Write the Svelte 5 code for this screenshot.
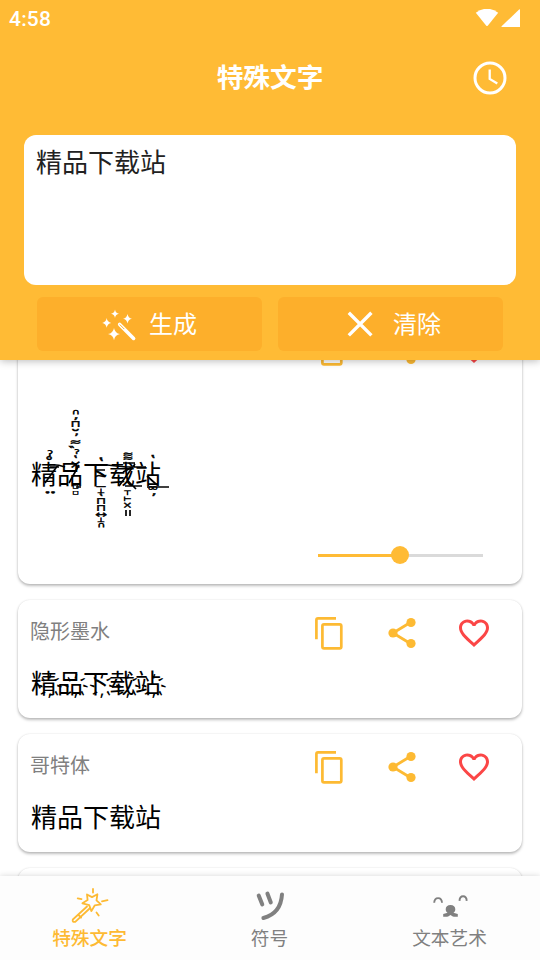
<script>
  let text = $state("精品下载站");
  let level = $state(50);
  let active = $state("特殊文字");

  const tabs = ["特殊文字", "符号", "文本艺术"];

  // Marks stacked over and under each letter: [glyph, x, y, size, rise]
  // rise is how far the glyph's middle sits above its baseline, in em
  const marks = [
    ["ˀ", 50, 53, 13, 0.58],
    ["˚", 49, 60, 15, 0.69],
    ["∙", 47.5, 92, 9, 0.31],
    ["∙", 53, 92, 9, 0.31],
    ["∩", 75.5, 11, 8, 0.36],
    ["ʼ", 76, 17.5, 14, 0.64],
    ["⊓", 75.5, 23.5, 10, 0.36],
    ["˘", 75.5, 29.5, 16, 0.72],
    ["ʼ", 76.5, 34.5, 12, 0.64],
    ["≈", 75.5, 42, 11, 0.31],
    ["‶", 71.5, 48, 12, 0.6],
    ["ˀ", 77, 52, 12, 0.58],
    ["ʽ", 75.5, 58, 12, 0.64],
    ["×", 75.5, 64.5, 11, 0.31],
    ["□", 75.5, 86.5, 5, 0.36],
    ["□", 75.5, 92, 5, 0.36],
    ["ʽ", 101, 61, 15, 0.64],
    ["~", 101, 77, 12, 0.31],
    ["−", 101, 87, 11, 0.31],
    ["⊥", 101, 91, 7, 0.36],
    ["ʽ", 101, 96, 12, 0.64],
    ["⊓", 101, 101, 10, 0.36],
    ["⊓", 101, 107.5, 10, 0.36],
    ["↔", 101, 114, 11, 0.36],
    ["⊥", 101, 119.5, 7, 0.36],
    ["∩", 101, 124.5, 8, 0.36],
    ["≈", 128, 54, 10, 0.31],
    ["≈", 128, 58.5, 10, 0.31],
    ["⊤", 127.5, 93, 7, 0.36],
    ["⊢", 127.5, 98.5, 7, 0.36],
    ["×", 127.5, 105.5, 9, 0.31],
    ["ʽ", 153, 58, 14, 0.64],
    ["∞", 153, 87.5, 11, 0.31],
    ["ʼ", 154, 94, 14, 0.64],
  ];
</script>

{#snippet copyIcon()}
  <svg class="icon" viewBox="0 0 36 36" fill="none" stroke="#fdba33" stroke-width="2.7">
    <path d="M4.4 24.3V5q0-1.6 1.6-1.6H24" />
    <rect x="10.4" y="9.4" width="18.9" height="23.9" rx="1.6" />
  </svg>
{/snippet}

{#snippet shareIcon()}
  <svg class="icon" viewBox="0 0 36 36" fill="#fdba33">
    <path d="M26.7 7.3L9 18l17.7 10.7" fill="none" stroke="#fdba33" stroke-width="2.8" />
    <circle cx="27" cy="7.5" r="4.6" />
    <circle cx="9" cy="18" r="4.6" />
    <circle cx="27" cy="28.5" r="4.6" />
  </svg>
{/snippet}

{#snippet heartIcon()}
  <svg class="icon" viewBox="0 0 24 24" fill="#fb4646">
    <path d="M16.5 3c-1.74 0-3.41.81-4.5 2.09C10.91 3.81 9.24 3 7.5 3 4.42 3 2 5.42 2 8.5c0 3.78 3.4 6.86 8.55 11.54L12 21.35l1.45-1.32C18.6 15.36 22 12.28 22 8.5 22 5.42 19.58 3 16.5 3zm-4.4 15.55l-.1.1-.1-.1C7.14 14.24 4 11.39 4 8.5 4 6.5 5.5 5 7.5 5c1.54 0 3.04.99 3.57 2.36h1.87C13.46 5.99 14.96 5 16.5 5c2 0 3.5 1.5 3.5 3.5 0 2.89-3.14 5.74-7.9 10.05z" />
  </svg>
{/snippet}

{#snippet cardHead(name)}
  <div class="card-head">
    {#if name}
      <span class="name">{name}</span>
    {/if}
    <button aria-label="复制">{@render copyIcon()}</button>
    <button aria-label="分享">{@render shareIcon()}</button>
    <button aria-label="收藏">{@render heartIcon()}</button>
  </div>
{/snippet}

<div class="app">
  <header>
    <div class="status">
      <span>4:58</span>
      <svg width="46" height="20" viewBox="0 0 46 20" fill="#fff">
        <path d="M0.8 3.8Q12 -4.4 23.2 3.8L12.7 16.7q-.7.8-1.4 0z" />
        <path d="M45 .8V18H27.2q-1.2 0-.4-.9L44.1.5q.9-.7.9.3z" />
      </svg>
    </div>

    <div class="toolbar">
      <h1>特殊文字</h1>
      <button class="history" aria-label="历史">
        <svg width="34" height="34" viewBox="0 0 34 34" fill="none" stroke="#fff">
          <circle cx="17" cy="17" r="15" stroke-width="3" />
          <path d="M16.7 8.6v9.3l7.6 4.6" stroke-width="2.3" />
        </svg>
      </button>
    </div>

    <textarea bind:value={text} spellcheck="false"></textarea>

    <div class="actions">
      <button>
        <svg width="36" height="36" viewBox="0 0 36 36" fill="#fff">
          <path d="M14 3.5q.6 3.7 4 4.2-3.4.5-4 4.2-.6-3.7-4-4.2 3.4-.5 4-4.2z" />
          <path d="M26.5 8q.7 4 4.4 4.7-3.7.7-4.4 4.7-.7-4-4.4-4.7 3.7-.7 4.4-4.7z" />
          <path d="M5.7 12q.7 4.2 4.5 4.9-3.8.7-4.5 4.9-.7-4.2-4.5-4.9 3.8-.7 4.5-4.9z" />
          <path d="M13 22q.9 5.2 6 6.1-5.1.9-6 6.1-.9-5.2-6-6.1 5.1-.9 6-6.1z" />
          <path d="M18.7 18.4L32.6 32.4" stroke="#fff" stroke-width="3.6" stroke-linecap="round" />
          <path d="M19 18.8l4 4" stroke="#fdaf2b" stroke-width="1" stroke-linecap="round" />
        </svg>
        <span>生成</span>
      </button>
      <button class="clear" onclick={() => (text = "")}>
        <svg width="36" height="36" viewBox="0 0 36 36" stroke="#fff" stroke-width="3.4">
          <path d="M6.8 6.8l22.6 22.6M29.4 6.8L6.8 29.4" />
        </svg>
        <span>清除</span>
      </button>
    </div>
  </header>

  <main>
    <section class="card tall">
      {@render cardHead("")}
      <div class="result">
        精品下载站
        <svg class="marks" width="190" height="140" viewBox="0 0 190 140">
          {#each marks as [glyph, x, y, size, rise]}
            <text transform="translate({x} {y + size * rise * 0.9}) scale(1.3 0.9)" font-size={size}>{glyph}</text>
          {/each}
          <!-- struck-through strokes -->
          <path d="M48 65q9-1 17 2M45 83L58 65M50 67h9M69 83l10-18M76 87h5M85 65h22l19 2h20M96 70h9M125 86h17M119 86l16-22M123 72l12-6M127 80l9 9M123 63h12M147 87h22M147 76l10 9M126 110v6M130 110v6" />
        </svg>
      </div>
      <div class="slider" role="slider" aria-valuenow={level} tabindex="0" aria-label="强度">
        <div class="fill" style="width: {level}%"></div>
        <div class="thumb" style="left: {level}%"></div>
      </div>
    </section>

    <section class="card">
      {@render cardHead("隐形墨水")}
      <div class="result">精҉品҉下҉载҉站҉</div>
    </section>

    <section class="card">
      {@render cardHead("哥特体")}
      <div class="result">精品下载站</div>
    </section>

    <section class="card"></section>
  </main>

  <nav>
    {#each tabs as tab, i}
      <button class:active={active === tab} onclick={() => (active = tab)}>
        <svg width="40" height="38" viewBox="0 0 40 38" fill="none" stroke="currentColor" stroke-linecap="round">
          {#if i === 0}
            <path d="M17 7.5l5 2.6 5.4-2.8-.9 6 4.3 4.1-6 .9-3.4 5.8-2.2-6-6.8-1.8 5.2-3.3z" stroke-width="1.8" stroke-linejoin="round" />
            <path d="M17 19.5L2.8 32.5q-.8 2.8 2.4 2.4L19.6 21.5M8.6 28l2.5 2.5" stroke-width="1.8" />
            <path d="M23 2v3.5M7.7 11.3l3.8.8M32 14.3l5.5-1.2M26.5 25.5l2.2 3" stroke-width="1.8" />
          {:else if i === 1}
            <path d="M8.7 8.5l3.6 9M17.4 6.5l3.4 9M32 7.4Q30.8 26.5 13.4 31" stroke-width="4" />
          {:else}
            <path d="M4.2 15.8q.2-4.7 3.9-4.7t3.9 4.7M29.5 13.9q.2-4.6 3.6-4.6t3.6 4.6" stroke-width="1.9" stroke-linecap="butt" />
            <path d="M20.5 18c-3.1 0-4.8 1.8-4.8 4.2 0 1.8.8 2.8 1.9 3.6l-4.4 1.200v2.700c4.400.7 6.200-.9 7.300-1.700 1.100.8 2.900 2.400 7.300 1.700v-2.700l-4.400-1.200c1.100-.8 1.900-1.800 1.900-3.600 0-2.400-1.700-4.200-4.800-4.200z" fill="currentColor" stroke="none" />
          {/if}
        </svg>
        <span>{tab}</span>
      </button>
    {/each}
  </nav>
</div>

<style>
  .app {
    width: 540px;
    height: 960px;
    display: flex;
    flex-direction: column;
    overflow: hidden;
    background: #fff;
    font-family: Roboto, "Noto Sans CJK SC", sans-serif;
  }

  button {
    border: none;
    background: none;
    padding: 0;
    font-family: inherit;
    color: inherit;
    cursor: pointer;
  }

  svg {
    display: block;
    flex: none;
  }

  header {
    height: 360px;
    flex: none;
    background: #ffbb35;
    color: #fff;
    box-shadow: 0 1px 8px rgba(0, 0, 0, 0.28);
    z-index: 1;
  }

  .status {
    height: 37px;
    padding: 0 19px 0 9px;
    display: flex;
    align-items: center;
    justify-content: space-between;
    font-size: 21px;
    font-weight: 500;
    letter-spacing: 0.2px;
  }

  .toolbar {
    height: 82px;
    display: grid;
    grid-template-columns: 1fr auto 1fr;
    align-items: center;
    padding: 0 33px;
  }

  h1 {
    grid-column: 2;
    margin: 0;
    font-size: 26.7px;
    line-height: 40px;
    font-weight: 600;
  }

  .history {
    justify-self: end;
  }

  textarea {
    display: block;
    box-sizing: border-box;
    width: 492px;
    height: 150px;
    margin: 16px 24px 12px;
    padding: 9px 12px;
    border: none;
    border-radius: 12px;
    outline: none;
    resize: none;
    background: #fff;
    color: #222;
    font: 26px/39px Roboto, "Noto Sans CJK SC", sans-serif;
  }

  .actions {
    display: flex;
    gap: 16px;
    padding: 0 37px;
  }

  .actions button {
    width: 225px;
    height: 54px;
    display: flex;
    align-items: center;
    padding-left: 64px;
    gap: 12px;
    border-radius: 6px;
    background: #fdaf2b;
    font-size: 24px;
  }

  .actions span {
    margin-top: -4px;
  }

  .actions .clear {
    gap: 15px;
  }

  main {
    flex: 1;
    min-height: 0;
    overflow: hidden;
    display: flex;
    flex-direction: column;
    gap: 16px;
    padding: 0 18px;
  }

  .card {
    flex: none;
    height: 118px;
    box-sizing: border-box;
    padding: 12px 30px 0 12px;
    border-radius: 12px;
    background: #fff;
    box-shadow: 0 2px 3px rgba(0, 0, 0, 0.25), 0 0 2px rgba(0, 0, 0, 0.12);
  }

  .tall {
    height: 268px;
    margin-top: -44px;
  }

  .card-head {
    height: 42px;
    display: flex;
    align-items: center;
    justify-content: flex-end;
    gap: 36px;
  }

  .name {
    flex: 1;
    margin-top: -5px;
    color: #808080;
    font-size: 20px;
  }

  .icon {
    width: 36px;
    height: 36px;
  }

  .result {
    position: relative;
    margin: 10px 0 0 1px;
    height: 40px;
    line-height: 40px;
    font-size: 26px;
    color: #000;
    white-space: nowrap;
  }

  .tall .result {
    height: 175px;
    margin-top: 0;
    line-height: 211px;
  }

  .marks {
    position: absolute;
    left: -31px;
    top: 30px;
    overflow: visible;
    font-family: "DejaVu Sans", sans-serif;
    text-anchor: middle;
    stroke: #000;
    stroke-width: 0.5;
  }

  .marks path {
    fill: none;
    stroke-width: 1.7;
  }

  .slider {
    position: relative;
    width: 165px;
    height: 3px;
    margin: 9px 9px 0 auto;
    background: #dadada;
  }

  .fill {
    height: 3px;
    background: #ffbb35;
  }

  .thumb {
    position: absolute;
    top: -8px;
    width: 18px;
    height: 18px;
    margin-left: -9.5px;
    border-radius: 50%;
    background: #ffbb35;
  }

  nav {
    flex: none;
    height: 84px;
    display: flex;
    background: #fdfdfd;
    box-shadow: 0 0 6px rgba(0, 0, 0, 0.16);
    z-index: 1;
  }

  nav button {
    flex: 1;
    display: flex;
    flex-direction: column;
    align-items: center;
    padding: 11px 1px 0 0;
    color: #808080;
    font-size: 18.7px;
    line-height: 28px;
  }

  nav .active {
    color: #fdba33;
    font-weight: 500;
  }
</style>
